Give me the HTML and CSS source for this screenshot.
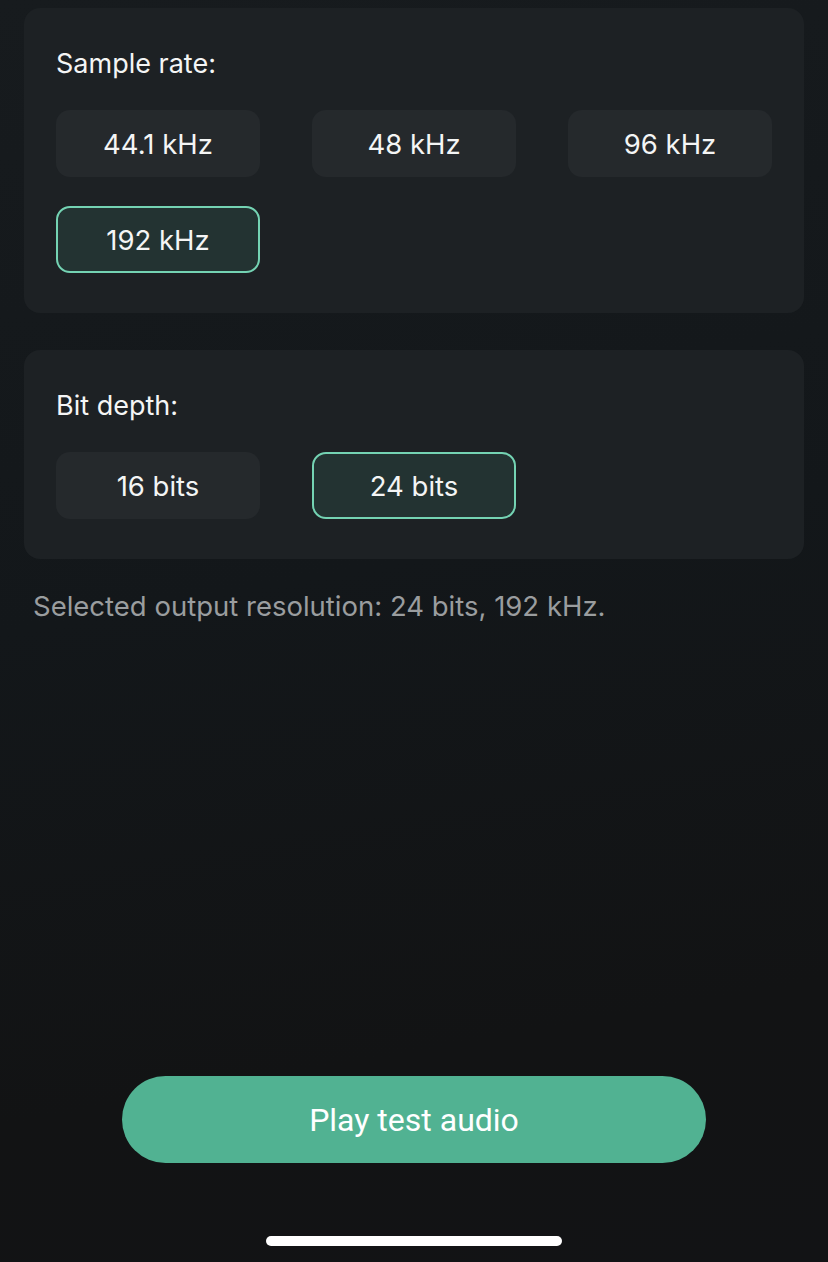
FILE: index.html
```html
<!DOCTYPE html>
<html lang="en">
<head>
	<meta charset="UTF-8" />
	<meta name="viewport" content="width=device-width, initial-scale=1.0" />
	<title>Output resolution</title>
	<link rel="stylesheet" href="styles.css">
</head>
<body>
	<div class="screen">
		<div class="card">
			<p class="card_label">Sample rate:</p>
			<div class="opts">
				<button type="button" class="opt">44.1 kHz</button>
				<button type="button" class="opt">48 kHz</button>
				<button type="button" class="opt">96 kHz</button>
				<button type="button" class="opt opt_on">192 kHz</button>
			</div>
		</div>
		<!--card-->
		<div class="card">
			<p class="card_label">Bit depth:</p>
			<div class="opts">
				<button type="button" class="opt">16 bits</button>
				<button type="button" class="opt opt_on">24 bits</button>
			</div>
		</div>
		<!--card-->
		<p class="summary">Selected output resolution: 24 bits, 192 kHz.</p>

		<div class="foot">
			<button type="button" class="play_btn">Play test audio</button>
			<div class="home_bar"></div>
		</div>
	</div>
</body>
</html>
```

FILE: styles.css
```css
* { margin: 0; padding: 0; box-sizing: border-box; }
html, body { height: 100%; }
body {
	background: linear-gradient(170deg, #171b1e 0%, #13171a 45%, #121314 80%, #121315 100%);
	font-family: Inter, "Liberation Sans", sans-serif;
	color: #fff;
}
.screen {
	display: flex;
	flex-direction: column;
	min-height: 1262px;
	padding: 8px 24px 16px;
}
.card {
	background: #1d2124;
	border-radius: 16px;
	padding: 40px 32px;
}
.card + .card { margin-top: 37px; }
.card_label {
	font-size: 27px;
	line-height: 32px;
	margin-bottom: 30px;
	color: #f4f5f5;
}
.opts {
	display: grid;
	grid-template-columns: repeat(3, 204px);
	column-gap: 52px;
	row-gap: 29px;
}
.opt {
	height: 67px;
	border: 2px solid transparent;
	border-radius: 14px;
	background: #25292c;
	color: #f4f5f5;
	font-family: Inter, "Liberation Sans", sans-serif;
	font-size: 27.5px;
}
.opt_on {
	background: #233332;
	border-color: #74d3b3;
}
.summary {
	margin-top: 30px;
	padding-left: 9px;
	font-size: 27.5px;
	line-height: 34px;
	color: #9a9d9f;
}
.foot {
	margin-top: auto;
	display: flex;
	flex-direction: column;
	align-items: center;
}
.play_btn {
	width: 584px;
	height: 87px;
	border: 0;
	border-radius: 44px;
	background: #51b292;
	color: #fff;
	font-family: Roboto, "Liberation Sans", sans-serif;
	font-size: 32px;
}
.home_bar {
	width: 296px;
	height: 10px;
	margin-top: 73px;
	border-radius: 5px;
	background: #fff;
}
```
